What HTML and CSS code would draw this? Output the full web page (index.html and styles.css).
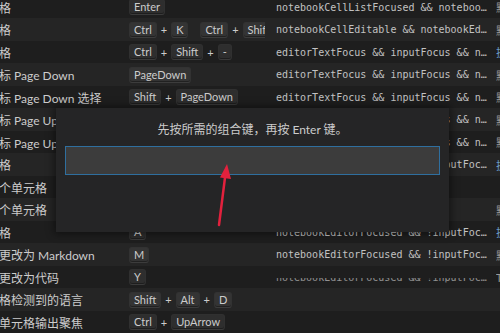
FILE: index.html
```html
<!DOCTYPE html>
<html lang="zh-CN">
<head>
    <meta charset="UTF-8">
    <meta name="viewport" content="width=device-width, initial-scale=1.0">
    <title>键盘快捷方式</title>
    <link rel="stylesheet" href="styles.css">
</head>
<body>
    <div class="list">
        <div class="row">
            <div class="cmd">格</div>
            <div class="keys"><span class="chord"><span class="kbd">Enter</span></span></div>
            <div class="when">notebookCellListFocused &amp;&amp; noteboo…</div>
            <div class="src">默认</div>
        </div>
        <div class="row">
            <div class="cmd">格</div>
            <div class="keys">
                <span class="chord"><span class="kbd">Ctrl</span><span class="plus">+</span><span class="kbd">K</span></span>
                <span class="chord"><span class="kbd">Ctrl</span><span class="plus">+</span><span class="kbd">Shift</span></span>
            </div>
            <div class="when">notebookCellEditable &amp;&amp; notebookEd…</div>
            <div class="src">默认</div>
        </div>
        <div class="row">
            <div class="cmd">格</div>
            <div class="keys"><span class="chord"><span class="kbd">Ctrl</span><span class="plus">+</span><span class="kbd">Shift</span><span class="plus">+</span><span class="kbd">-</span></span></div>
            <div class="when">editorTextFocus &amp;&amp; inputFocus &amp;&amp; n…</div>
            <div class="src ext">扩展</div>
        </div>
        <div class="row">
            <div class="cmd">标 Page Down</div>
            <div class="keys"><span class="chord"><span class="kbd">PageDown</span></span></div>
            <div class="when">editorTextFocus &amp;&amp; inputFocus &amp;&amp; n…</div>
            <div class="src">默认</div>
        </div>
        <div class="row">
            <div class="cmd">标 Page Down 选择</div>
            <div class="keys"><span class="chord"><span class="kbd">Shift</span><span class="plus">+</span><span class="kbd">PageDown</span></span></div>
            <div class="when">editorTextFocus &amp;&amp; inputFocus &amp;&amp; n…</div>
            <div class="src">默认</div>
        </div>
        <div class="row">
            <div class="cmd">标 Page Up</div>
            <div class="keys"><span class="chord"><span class="kbd">PageUp</span></span></div>
            <div class="when">editorTextFocus &amp;&amp; inputFocus &amp;&amp; n…</div>
            <div class="src">默认</div>
        </div>
        <div class="row">
            <div class="cmd">标 Page Up 选择</div>
            <div class="keys"><span class="chord"><span class="kbd">Shift</span><span class="plus">+</span><span class="kbd">PageUp</span></span></div>
            <div class="when">editorTextFocus &amp;&amp; inputFocus &amp;&amp; n…</div>
            <div class="src">默认</div>
        </div>
        <div class="row">
            <div class="cmd">格</div>
            <div class="keys"><span class="chord"><span class="kbd">Ctrl</span><span class="plus">+</span><span class="kbd">Enter</span></span></div>
            <div class="when">notebookEditorFocused &amp;&amp; !inputFoc…</div>
            <div class="src ext">扩展</div>
        </div>
        <div class="row">
            <div class="cmd">个单元格</div>
            <div class="keys"><span class="chord"><span class="kbd">J</span></span></div>
            <div class="when">notebookEditorFocused</div>
            <div class="src"></div>
        </div>
        <div class="row">
            <div class="cmd">个单元格</div>
            <div class="keys"><span class="chord"><span class="kbd">K</span></span></div>
            <div class="when">notebookEditorFocused</div>
            <div class="src">默认</div>
        </div>
        <div class="row">
            <div class="cmd">格</div>
            <div class="keys"><span class="chord"><span class="kbd">A</span></span></div>
            <div class="when">notebookEditorFocused &amp;&amp; !inputFoc…</div>
            <div class="src ext">扩展</div>
        </div>
        <div class="row">
            <div class="cmd">更改为 Markdown</div>
            <div class="keys"><span class="chord"><span class="kbd">M</span></span></div>
            <div class="when">notebookEditorFocused &amp;&amp; !inputFoc…</div>
            <div class="src">默认</div>
        </div>
        <div class="row">
            <div class="cmd">更改为代码</div>
            <div class="keys"><span class="chord"><span class="kbd">Y</span></span></div>
            <div class="when faded">notebookEditorFocused &amp;&amp; !inputFoc…</div>
            <div class="src">T</div>
        </div>
        <div class="row">
            <div class="cmd">格检测到的语言</div>
            <div class="keys"><span class="chord"><span class="kbd">Shift</span><span class="plus">+</span><span class="kbd">Alt</span><span class="plus">+</span><span class="kbd">D</span></span></div>
            <div class="when"></div>
            <div class="src"></div>
        </div>
        <div class="row">
            <div class="cmd">单元格输出聚焦</div>
            <div class="keys"><span class="chord"><span class="kbd">Ctrl</span><span class="plus">+</span><span class="kbd">UpArrow</span></span></div>
            <div class="when"></div>
            <div class="src"></div>
        </div>
    </div>

    <!-- define keybinding widget -->
    <div class="define-keybinding">
        <div class="prompt">先按所需的组合键，再按 Enter 键。</div>
        <div class="key-input"></div>
    </div>

    <svg class="arrow" width="500" height="333" viewBox="0 0 500 333">
        <line x1="219" y1="225" x2="225.2" y2="176" stroke="#e3213d" stroke-width="2.5" stroke-linecap="round"/>
        <polygon points="227,164 231,179 220,177.5" fill="#e3213d"/>
    </svg>
</body>
</html>
```

FILE: styles.css
```css
body {
    margin: 0;
    width: 500px;
    height: 333px;
    overflow: hidden;
    position: relative;
    background-color: #1e1e1e;
    color: #cccccc;
    font-family: Lato, "Noto Sans CJK SC", sans-serif;
}

.list {
    margin-top: -4.25px;
}

.row {
    display: grid;
    grid-template-columns: 129px 147px 220px 1fr;
    align-items: center;
    height: 22.5px;
}

.row:nth-child(even) {
    background-color: #252525;
}

.cmd {
    font-size: 12px;
    white-space: nowrap;
    overflow: hidden;
    margin-left: -1px;
}

.keys {
    display: flex;
    align-items: center;
    width: 136px;
    overflow: hidden;
    white-space: nowrap;
}

.chord {
    display: flex;
    align-items: center;
    flex-shrink: 0;
}

.chord + .chord {
    margin-left: 12px;
}

.kbd {
    font-size: 11px;
    height: 16px;
    line-height: 14px;
    padding: 0 4px;
    box-sizing: border-box;
    border-radius: 3px;
    background-color: rgba(128, 128, 128, 0.17);
    border: 1px solid rgba(51, 51, 51, 0.6);
    border-bottom-color: rgba(68, 68, 68, 0.6);
    box-shadow: inset 0 -1px 0 rgba(0, 0, 0, 0.36);
}

.plus {
    font-size: 11px;
    margin: 0 4px;
}

.when {
    font-family: "DejaVu Sans Mono", monospace;
    font-size: 10px;
    color: #c2c2c2;
    white-space: nowrap;
    overflow: hidden;
}

.when.faded {
    opacity: 0.7;
    clip-path: inset(58% 0 0 0);
}

.src {
    font-size: 11px;
    color: #9a9a9a;
    white-space: nowrap;
    overflow: hidden;
}

.src.ext {
    color: #6d9cc8;
}

.define-keybinding {
    position: absolute;
    left: 56px;
    top: 108px;
    width: 393px;
    height: 124px;
    box-sizing: border-box;
    padding: 14px 9px 0;
    background-color: #252526;
    box-shadow: 0 0 8px 2px rgba(0, 0, 0, 0.45);
}

.prompt {
    font-size: 12px;
    line-height: 16px;
    text-align: center;
    color: #cccccc;
}

.key-input {
    margin-top: 8px;
    height: 29px;
    box-sizing: border-box;
    border: 1px solid #2f6f9f;
    background-color: #3c3c3c;
}

.arrow {
    position: absolute;
    left: 0;
    top: 0;
    pointer-events: none;
}
```
